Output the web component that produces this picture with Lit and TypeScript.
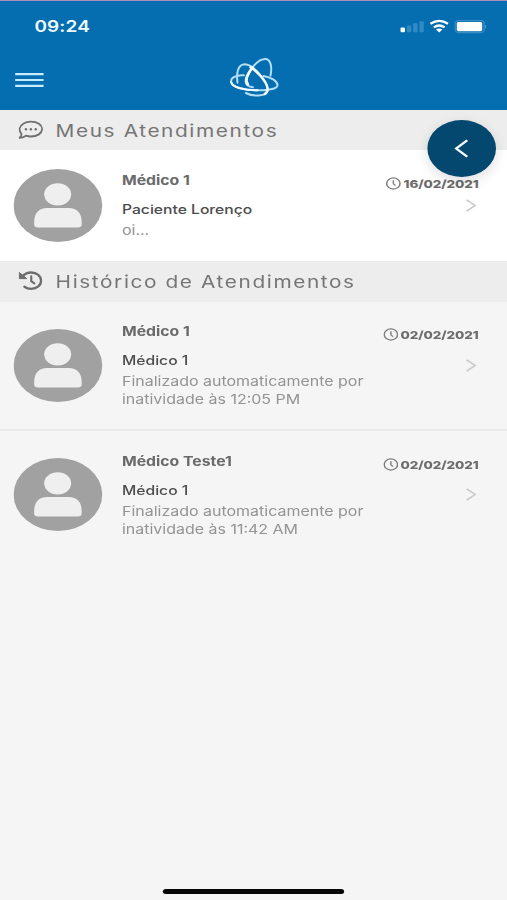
import { LitElement, html, css, svg } from "lit";
import { customElement, property } from "lit/decorators.js";

type Appointment = { doctor: string; person: string; note: string; date: string };

const current: Appointment[] = [
  { doctor: "Médico 1", person: "Paciente Lorenço", note: "oi...", date: "16/02/2021" },
];
const history: Appointment[] = [
  { doctor: "Médico 1", person: "Médico 1", note: "Finalizado automaticamente por inatividade às 12:05 PM", date: "02/02/2021" },
  { doctor: "Médico Teste1", person: "Médico 1", note: "Finalizado automaticamente por inatividade às 11:42 AM", date: "02/02/2021" },
];

const signalBars = [0, 1, 2, 3];

@customElement("status-bar")
class StatusBar extends LitElement {
  static styles = css`
    :host { display: flex; justify-content: space-between; align-items: center; box-sizing: border-box; height: 49px; padding: 2px 17px 0 28.1px; color: #f0faff; }
    .time { font-size: 15.5px; font-weight: 600; letter-spacing: 0.1px; }
    .icons { display: block; width: 71px; height: 16px; margin-top: -2px; }
  `;
  render() {
    return html`
      <span class="time">09:24</span>
      <svg class="icons" viewBox="399 18 87 16" preserveAspectRatio="none">
        ${signalBars.map((i) => svg`<rect x=${400.3 + i * 6.3} y=${27.5 - i * 2.1} width="4.4" height=${4.7 + i * 2.1} rx="1" fill=${i ? "#318ac4" : "#fff"} />`)}
        <g fill="none" stroke="#fff" stroke-width="2.3">
          <path d="M430.2 23.8Q439 17.8 447.8 23.8" />
          <path d="M433.6 27.4Q439 23.6 444.4 27.4" />
        </g>
        <path d="M435.8 29.6Q439 27.6 442.2 29.6L439 32.4Z" fill="#fff" />
        <rect x="455" y="20.6" width="29" height="12" rx="3.5" fill="none" stroke="#3a8ec6" stroke-width="1.2" />
        <rect x="456.6" y="22" width="25.4" height="9.2" rx="1.6" fill="#fff" />
        <path d="M485.2 24.4Q487 26.5 485.2 28.8Z" fill="#7db5db" />
      </svg>
    `;
  }
}

@customElement("nav-bar")
class NavBar extends LitElement {
  static styles = css`
    :host { display: flex; align-items: center; height: 60px; padding: 0 12px; }
    .menu { display: block; width: 24px; height: 16px; }
    .logo { display: block; width: 65.3px; height: 55px; margin: -5px 0 0 140.1px; }
  `;
  render() {
    return html`
      <svg class="menu" viewBox="0 0 24 16" preserveAspectRatio="none" stroke="#c8ebff" stroke-width="2.2">
        <path d="M.4 2.2H23.6M.4 8H23.6M.4 13.8H23.6" />
      </svg>
      <svg class="logo" viewBox="0 0 240 165" preserveAspectRatio="none" fill="none" stroke-linecap="round">
        <g stroke="#b4def6">
          <path d="M85 76C62 74 44 84 47 97C51 113 88 121 126 121C162 121 187 116 186 104C185 92 166 82 144 78" stroke-width="6" />
          <path d="M66 98C62 72 66 43 88 43C108 44 132 70 148 94C163 119 158 134 134 136C118 138 102 135 91 129" stroke-width="6" />
          <path d="M112 112C86 108 85 91 100 68C116 42 136 25 152 27C166 30 170 52 165 77" stroke-width="6" />
        </g>
        <g stroke="#f4fcff">
          <path d="M47 97C51 113 88 121 126 121" stroke-width="6" />
          <path d="M105 52C124 64 139 80 150 98C160 116 157 126 148 132" stroke-width="7" />
          <path d="M97 103C88 92 96 72 110 53" stroke-width="8" />
        </g>
      </svg>
    `;
  }
}

@customElement("section-title")
class SectionTitle extends LitElement {
  @property() icon = "chat";
  @property() label = "";
  static styles = css`
    :host { display: flex; align-items: center; height: 41px; padding-left: 14.7px; background: #ededed; color: #757575; }
    .icon { display: block; width: 20.4px; height: 21px; margin: -2px 10.3px 0 0; }
    .label { font-size: 17px; letter-spacing: 1.3px; white-space: nowrap; }
  `;
  render() {
    const chat = svg`
      <path d="M3.2 15.2C1.5 13.4 1 11.6 1.2 9.6C1.9 5.7 6.5 2.7 12.5 2.7C19 2.7 23.8 6 23.8 10.1C23.8 14.3 19 17.5 12.5 17.5C10.7 17.5 9 17.2 7.6 16.7C5.7 18 3.6 18.8 1.2 18.8C2.5 17.7 3.1 16.5 3.2 15.2Z" fill="none" stroke="#707070" stroke-width="1.8" stroke-linejoin="round" />
      <g fill="#707070"><circle cx="7.6" cy="10.2" r="1.2" /><circle cx="12.5" cy="10.2" r="1.2" /><circle cx="17.4" cy="10.2" r="1.2" /></g>`;
    const clock = svg`
      <path d="M4.5 6.1C6.5 3.8 9.3 2.5 12.7 2.5C18.6 2.5 22.7 6 22.7 10.7C22.7 15.3 18.6 18.8 12.9 18.8C10.2 18.8 7.9 18.1 6 16.7" fill="none" stroke="#6c6c6c" stroke-width="2.3" stroke-linecap="round" />
      <path d="M1 2.6V8.6H8.4Z" fill="#6c6c6c" stroke="#6c6c6c" stroke-linejoin="round" />
      <path d="M12.9 6.4V11.2L16 13.4" fill="none" stroke="#6c6c6c" stroke-width="2.1" stroke-linecap="round" />`;
    return html`
      <svg class="icon" viewBox="0 0 25 21" preserveAspectRatio="none">${this.icon === "chat" ? chat : clock}</svg>
      <span class="label">${this.label}</span>
    `;
  }
}

@customElement("appointment-row")
class AppointmentRow extends LitElement {
  @property({ attribute: false }) item!: Appointment;
  static styles = css`
    :host { display: flex; box-sizing: border-box; padding: 0 23.2px 0 11.3px; }
    .avatar { display: block; flex: none; align-self: center; width: 72.6px; height: 73px; margin-right: 15.7px; }
    .body { flex: none; width: 206px; padding-top: var(--text-top, 20px); }
    .doctor { font-size: 12.9px; font-weight: 700; line-height: 20px; color: #6a6a6a; }
    .person { margin-top: 9px; font-size: 12.8px; font-weight: 500; line-height: 19px; color: #4c4c4c; }
    .note { margin-top: 2px; font-size: 13.05px; line-height: 18px; color: #939393; }
    .side { flex: 1; display: grid; justify-items: end; }
    .date, .chevron { grid-area: 1 / 1; }
    .date { display: flex; align-items: center; align-self: start; gap: 2px; height: 18px; margin-top: calc(var(--text-top, 20px) + 4px); font-size: 11px; font-weight: 800; letter-spacing: -0.08px; color: #6c6c6c; white-space: nowrap; }
    .clock { width: 12.4px; height: 13px; margin-top: -1px; }
    .chevron { align-self: center; width: 9px; height: 13px; margin-right: 1.6px; }
  `;
  render() {
    const { doctor, person, note, date } = this.item;
    return html`
      <svg class="avatar" viewBox="0 0 73 73" preserveAspectRatio="none">
        <circle cx="36.5" cy="36.5" r="36.4" fill="#a1a1a1" />
        <circle cx="36.3" cy="25.3" r="11.1" fill="#efefef" />
        <path d="M17 55.5V53C17 44 21 39 27.5 39H45.5C52 39 56 44 56 53V55.5Q56 58.5 53 58.5H20Q17 58.5 17 55.5Z" fill="#efefef" />
      </svg>
      <div class="body">
        <div class="doctor">${doctor}</div>
        <div class="person">${person}</div>
        <div class="note">${note}</div>
      </div>
      <div class="side">
        <div class="date">
          <svg class="clock" viewBox="0 0 12 13" preserveAspectRatio="none" fill="none" stroke="#7c7c7c">
            <ellipse cx="6" cy="6.5" rx="5.3" ry="5.6" stroke-width="1.2" />
            <path d="M6 3.3V6.8L7.7 8.6" stroke-width="1.1" />
          </svg>
          <span>${date}</span>
        </div>
        <svg class="chevron" viewBox="0 0 9 14" preserveAspectRatio="none"><path d="M1 1L8 7L1 13" fill="none" stroke="#cdcdcd" stroke-width="1.7" /></svg>
      </div>
    `;
  }
}

@customElement("app-root")
class AppRoot extends LitElement {
  static styles = css`
    :host { display: block; position: relative; width: 507px; height: 900px; overflow: hidden; background: #f5f5f5; }
    .screen { display: flex; flex-direction: column; position: relative; width: 414px; height: 900px; transform: scaleX(1.22464); transform-origin: 0 0; font-family: Inter, "Liberation Sans", sans-serif; }
    .top { height: 110px; box-sizing: border-box; background: #056eb1; border-top: 1.5px solid #a98fb5; }
    .first { height: 40px; padding-top: 1px; box-sizing: border-box; }
    .open { height: 111px; background: #fff; --text-top: 21px; }
    .closed { height: 127px; }
    .closed + .closed { height: 129px; border-top: 2px solid #eaeaea; --text-top: 21px; }
    .back { position: absolute; left: 348.6px; top: 119.5px; width: 56.6px; height: 57px; border-radius: 50%; background: #04476f; box-shadow: 0 4px 12px rgba(0, 0, 0, 0.13); display: flex; align-items: center; justify-content: center; }
    .arrow { width: 11.5px; height: 19px; }
    .home { position: absolute; left: 132.7px; bottom: 6px; width: 148.6px; height: 5.5px; border-radius: 3px; background: #050505; }
  `;
  render() {
    return html`
      <div class="screen">
        <div class="top"><status-bar></status-bar><nav-bar></nav-bar></div>
        <section-title class="first" icon="chat" label="Meus Atendimentos"></section-title>
        ${current.map((a) => html`<appointment-row class="open" .item=${a}></appointment-row>`)}
        <section-title icon="history" label="Histórico de Atendimentos"></section-title>
        ${history.map((a) => html`<appointment-row class="closed" .item=${a}></appointment-row>`)}
        <div class="back"><svg class="arrow" viewBox="0 0 12 20" preserveAspectRatio="none"><path d="M11 1.3L1.6 10L11 18.7" fill="none" stroke="#f3fbff" stroke-width="2.3" /></svg></div>
        <div class="home"></div>
      </div>
    `;
  }
}
